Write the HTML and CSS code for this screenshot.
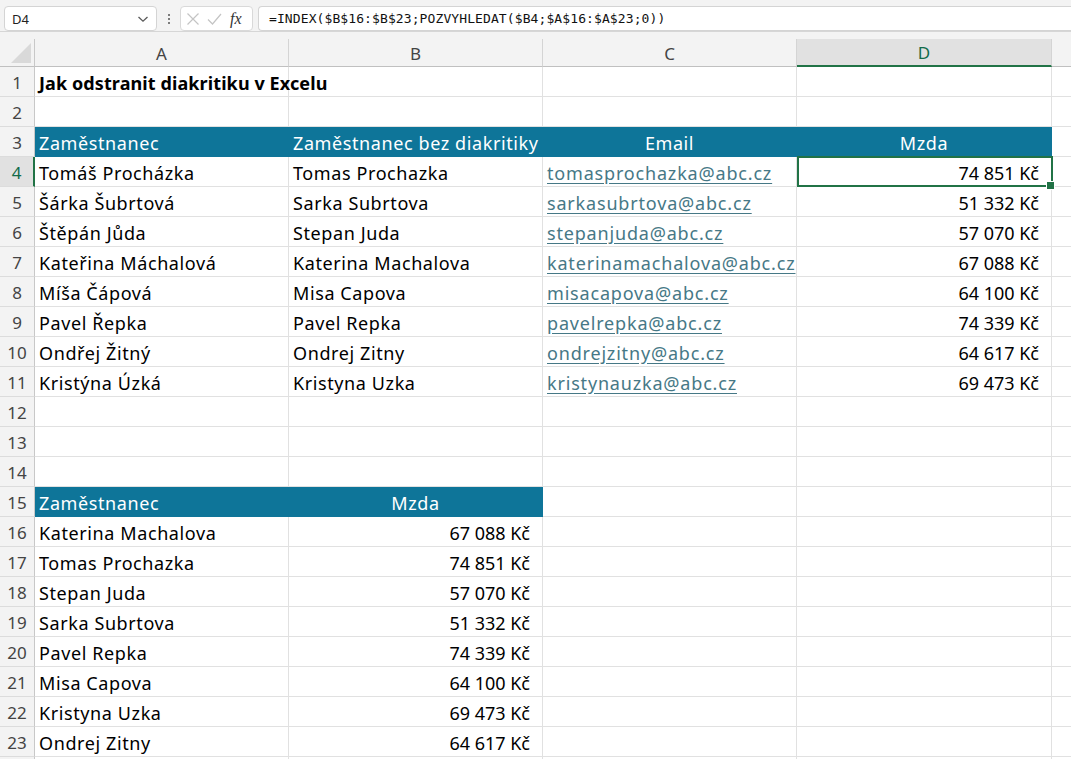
FILE: index.html
```html
<!DOCTYPE html>
<html lang="cs">
<head>
<meta charset="utf-8">
<title>Jak odstranit diakritiku v Excelu</title>
<link rel="stylesheet" href="styles.css">
</head>
<body>
<div class="app">
  <div class="toolbar">
    <div class="namebox">
      <span class="nb-text">D4</span>
      <svg class="chev" width="12" height="8" viewBox="0 0 12 8"><path d="M1.5 2 L6 6.2 L10.5 2" fill="none" stroke="#5a5a5a" stroke-width="1.3"/></svg>
    </div>
    <div class="dots"><span></span><span></span><span></span></div>
    <div class="fxbox">
      <svg width="14" height="14" viewBox="0 0 14 14"><path d="M1.5 1.5 L12.5 12.5 M12.5 1.5 L1.5 12.5" stroke="#c4c4c4" stroke-width="1.2" fill="none"/></svg>
      <svg width="15" height="14" viewBox="0 0 15 14"><path d="M1 7.5 L5.5 12 L14 2" stroke="#c4c4c4" stroke-width="1.2" fill="none"/></svg>
      <span class="fx">fx</span>
    </div>
    <div class="formula">=INDEX($B$16:$B$23;POZVYHLEDAT($B4;$A$16:$A$23;0))</div>
  </div>
  <div class="sheet">
    <div class="row colhead">
      <div class="corner"><span class="tri"></span></div>
      <div class="ch">A</div><div class="ch">B</div><div class="ch">C</div><div class="ch active">D</div><div class="ch last"></div>
    </div>
    <div class="row"><div class="rh">1</div><div class="c title">Jak odstranit diakritiku v Excelu</div><div class="c"></div><div class="c"></div><div class="c"></div><div class="c e"></div></div>
    <div class="row"><div class="rh">2</div><div class="c"></div><div class="c"></div><div class="c"></div><div class="c"></div><div class="c e"></div></div>
    <div class="row"><div class="rh">3</div><div class="c hd">Zaměstnanec</div><div class="c hd">Zaměstnanec bez diakritiky</div><div class="c hd ctr">Email</div><div class="c hd ctr">Mzda</div><div class="c e"></div></div>
    <div class="row"><div class="rh sel">4</div><div class="c">Tomáš Procházka</div><div class="c">Tomas Prochazka</div><div class="c"><a class="lnk">tomasprochazka@abc.cz</a></div><div class="c num active">74&nbsp;851&nbsp;Kč</div><div class="c e"></div></div>
    <div class="row"><div class="rh">5</div><div class="c">Šárka Šubrtová</div><div class="c">Sarka Subrtova</div><div class="c"><a class="lnk">sarkasubrtova@abc.cz</a></div><div class="c num">51&nbsp;332&nbsp;Kč</div><div class="c e"></div></div>
    <div class="row"><div class="rh">6</div><div class="c">Štěpán Jůda</div><div class="c">Stepan Juda</div><div class="c"><a class="lnk">stepanjuda@abc.cz</a></div><div class="c num">57&nbsp;070&nbsp;Kč</div><div class="c e"></div></div>
    <div class="row"><div class="rh">7</div><div class="c">Kateřina Máchalová</div><div class="c">Katerina Machalova</div><div class="c"><a class="lnk">katerinamachalova@abc.cz</a></div><div class="c num">67&nbsp;088&nbsp;Kč</div><div class="c e"></div></div>
    <div class="row"><div class="rh">8</div><div class="c">Míša Čápová</div><div class="c">Misa Capova</div><div class="c"><a class="lnk">misacapova@abc.cz</a></div><div class="c num">64&nbsp;100&nbsp;Kč</div><div class="c e"></div></div>
    <div class="row"><div class="rh">9</div><div class="c">Pavel Řepka</div><div class="c">Pavel Repka</div><div class="c"><a class="lnk">pavelrepka@abc.cz</a></div><div class="c num">74&nbsp;339&nbsp;Kč</div><div class="c e"></div></div>
    <div class="row"><div class="rh">10</div><div class="c">Ondřej Žitný</div><div class="c">Ondrej Zitny</div><div class="c"><a class="lnk">ondrejzitny@abc.cz</a></div><div class="c num">64&nbsp;617&nbsp;Kč</div><div class="c e"></div></div>
    <div class="row"><div class="rh">11</div><div class="c">Kristýna Úzká</div><div class="c">Kristyna Uzka</div><div class="c"><a class="lnk">kristynauzka@abc.cz</a></div><div class="c num">69&nbsp;473&nbsp;Kč</div><div class="c e"></div></div>
    <div class="row"><div class="rh">12</div><div class="c"></div><div class="c"></div><div class="c"></div><div class="c"></div><div class="c e"></div></div>
    <div class="row"><div class="rh">13</div><div class="c"></div><div class="c"></div><div class="c"></div><div class="c"></div><div class="c e"></div></div>
    <div class="row"><div class="rh">14</div><div class="c"></div><div class="c"></div><div class="c"></div><div class="c"></div><div class="c e"></div></div>
    <div class="row"><div class="rh">15</div><div class="c hd">Zaměstnanec</div><div class="c hd ctr">Mzda</div><div class="c"></div><div class="c"></div><div class="c e"></div></div>
    <div class="row"><div class="rh">16</div><div class="c">Katerina Machalova</div><div class="c num">67&nbsp;088&nbsp;Kč</div><div class="c"></div><div class="c"></div><div class="c e"></div></div>
    <div class="row"><div class="rh">17</div><div class="c">Tomas Prochazka</div><div class="c num">74&nbsp;851&nbsp;Kč</div><div class="c"></div><div class="c"></div><div class="c e"></div></div>
    <div class="row"><div class="rh">18</div><div class="c">Stepan Juda</div><div class="c num">57&nbsp;070&nbsp;Kč</div><div class="c"></div><div class="c"></div><div class="c e"></div></div>
    <div class="row"><div class="rh">19</div><div class="c">Sarka Subrtova</div><div class="c num">51&nbsp;332&nbsp;Kč</div><div class="c"></div><div class="c"></div><div class="c e"></div></div>
    <div class="row"><div class="rh">20</div><div class="c">Pavel Repka</div><div class="c num">74&nbsp;339&nbsp;Kč</div><div class="c"></div><div class="c"></div><div class="c e"></div></div>
    <div class="row"><div class="rh">21</div><div class="c">Misa Capova</div><div class="c num">64&nbsp;100&nbsp;Kč</div><div class="c"></div><div class="c"></div><div class="c e"></div></div>
    <div class="row"><div class="rh">22</div><div class="c">Kristyna Uzka</div><div class="c num">69&nbsp;473&nbsp;Kč</div><div class="c"></div><div class="c"></div><div class="c e"></div></div>
    <div class="row"><div class="rh">23</div><div class="c">Ondrej Zitny</div><div class="c num">64&nbsp;617&nbsp;Kč</div><div class="c"></div><div class="c"></div><div class="c e"></div></div>
    <div class="row"><div class="rh"></div><div class="c"></div><div class="c"></div><div class="c"></div><div class="c"></div><div class="c e"></div></div>
  </div>
</div>
</body>
</html>
```
FILE: styles.css
```css
* { box-sizing: border-box; }
html, body { margin: 0; padding: 0; }
body {
  width: 1071px;
  height: 759px;
  overflow: hidden;
  background: #ffffff;
  font-family: "Noto Sans", "Open Sans", sans-serif;
  color: #000;
}
.app { width: 1071px; height: 759px; overflow: hidden; }

.toolbar {
  height: 39px;
  background: #f3f3f3;
  display: flex;
  align-items: flex-start;
  padding: 6px 0 0 4px;
  position: relative;
}
.toolbar::after {
  content: "";
  position: absolute;
  left: 0; right: 0; top: 31px;
  height: 1px;
  background: #d6d6d6;
}
.namebox {
  width: 153px;
  height: 25px;
  background: #fff;
  border: 1px solid #d4d4d4;
  border-radius: 4px;
  display: flex;
  align-items: center;
  justify-content: space-between;
  padding: 0 7px 0 7px;
  font-size: 13px;
  color: #222;
}
.nb-text { font-family: "Noto Sans", sans-serif; font-size: 13px; }
.dots {
  width: 23px;
  height: 25px;
  display: flex;
  flex-direction: column;
  align-items: center;
  justify-content: center;
  gap: 2px;
}
.dots span { width: 2px; height: 2px; background: #555; border-radius: 1px; }
.fxbox {
  width: 73px;
  height: 25px;
  background: #fff;
  border: 1px solid #d9d9d9;
  border-radius: 4px;
  display: flex;
  align-items: center;
  padding: 0 4px 0 5px;
  gap: 7px;
}
.fx {
  font-family: "Liberation Serif", serif;
  font-style: italic;
  font-size: 16px;
  color: #333;
  margin-left: 1px;
}
.formula {
  margin-left: 5px;
  flex: 1;
  height: 25px;
  background: #fff;
  border: 1px solid #d4d4d4;
  border-right: 0;
  border-radius: 4px 0 0 4px;
  font-family: "DejaVu Sans Mono", monospace;
  font-size: 13px;
  letter-spacing: 0.1px;
  line-height: 23px;
  padding-left: 10px;
  color: #111;
  white-space: nowrap;
}

.sheet { background: #fff; }
.row {
  display: grid;
  grid-template-columns: 35px 254px 254px 254px 255px 19px;
  height: 30px;
}
.colhead {
  height: 28px;
  background: #f3f3f3;
}
.corner {
  border-right: 1px solid #c8c8c8;
  border-bottom: 1px solid #c0c0c0;
  position: relative;
}
.tri {
  position: absolute;
  right: 3px; bottom: 3px;
  width: 0; height: 0;
  border-left: 20px solid transparent;
  border-bottom: 20px solid #d9d9d9;
}
.ch {
  border-right: 1px solid #d4d4d4;
  border-bottom: 1px solid #c0c0c0;
  display: flex;
  align-items: center;
  justify-content: center;
  font-size: 17px;
  color: #444;
  padding-top: 1px;
}
.ch.active {
  background: #e1e1e1;
  border-bottom: 2px solid #217346;
  color: #136c4a;
}
.ch.last { border-right: 0; }

.rh {
  background: #f3f3f3;
  border-right: 1px solid #c8c8c8;
  border-bottom: 1px solid #dcdcdc;
  display: flex;
  align-items: center;
  justify-content: center;
  font-size: 17px;
  color: #444;
  padding-top: 1px;
}
.rh.sel {
  background: #e1e1e1;
  border-right: 2px solid #217346;
  color: #136c4a;
}

.c {
  border-right: 1px solid #e1e1e1;
  border-bottom: 1px solid #e1e1e1;
  display: flex;
  align-items: center;
  padding: 2px 4px 0 4px;
  font-size: 18px;
  letter-spacing: 0.6px;
  white-space: nowrap;
  overflow: visible;
  position: relative;
  min-width: 0;
}
.c.e { border-right: 0; }
.title { font-weight: 700; z-index: 1; letter-spacing: 0.1px; }
.hd {
  background: #0e7599;
  border-right-color: #0e7599;
  border-bottom-color: #0e7599;
  color: #fff;
}
.ctr { justify-content: center; }
.num { justify-content: flex-end; padding-right: 12px; letter-spacing: 0; }
.lnk { color: #467886; text-decoration: underline; text-underline-offset: 3px; letter-spacing: 0.82px; }

.c.active::before {
  content: "";
  position: absolute;
  left: 0; top: -1px; right: -2px; bottom: -1px;
  border: 2px solid #217346;
  pointer-events: none;
}
.c.active::after {
  content: "";
  position: absolute;
  right: -4px; bottom: -4px;
  width: 7px; height: 7px;
  background: #217346;
  border: 1px solid #fff;
  z-index: 2;
}
```
